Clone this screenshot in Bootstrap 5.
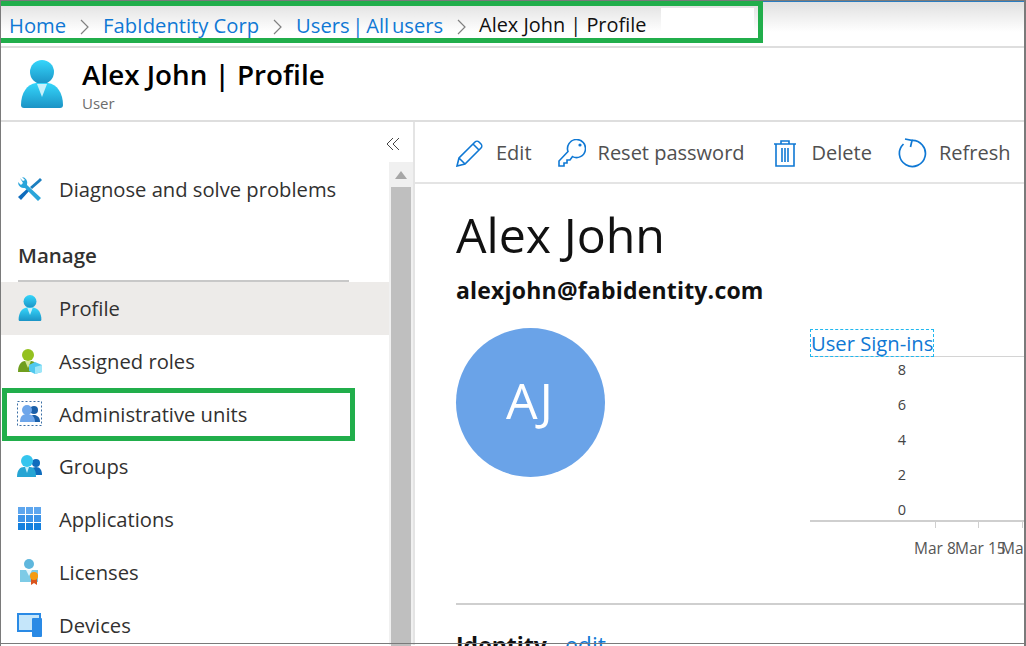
<!DOCTYPE html>
<html lang="en">
<head>
    <meta charset="UTF-8">
    <title>Alex John | Profile</title>
    <link href="https://cdn.jsdelivr.net/npm/bootstrap@5.3.0/dist/css/bootstrap.min.css" rel="stylesheet">
    <style>
        html, body { height: 100%; overflow: hidden; }
        body { background: #fff; font-family: "Open Sans", "Noto Sans", sans-serif; color: #323130; }
        a { color: #0f78d4; text-decoration: none; }

        .shot-frame { width: 1026px; height: 646px; position: relative; overflow: hidden;
            border-top: 1px solid #7a7a7a; border-left: 1px solid #7a7a7a;
            border-right: 2px solid #7a7a7a; }
        .frame-base { position: absolute; left: 0; right: 0; top: 642px; height: 1px; background: #7a7a7a; }

        .crumb-bar { height: 47px; padding: 9px 0 0 8px; gap: 14px; font-size: 20.200px; line-height: 28px; white-space: nowrap;
            background: linear-gradient(#e0e0e0, #fff 30px); border-top: 1px solid #2b7cc0; border-bottom: 2px solid #dedede; }
        .crumb-here { color: #111; font-size: 19.900px; margin-left: -1px; }
        .crumb-tight { word-spacing: -2.500px; }
        .crumb-sep { width: 9px; height: 16px; flex: none; }
        .crumb-blank { position: absolute; left: 660px; top: 7px; width: 93px; height: 30px; background: #fff; }

        .title-bar { height: 74px; border-bottom: 2px solid #dedede; padding-left: 20px; gap: 19px; }
        .title-bar h1 { font-size: 27.800px; line-height: 32px; margin: 0; font-weight: 600; color: #000; }
        .title-text { padding-top: 2px; }
        .title-sub { font-size: 15px; line-height: 19px; color: #6d6d6d; margin-top: 4px; }

        .page-body { height: 523px; }
        .side-col { width: 414px; flex: none; border-right: 2px solid #e4e4e4; position: relative; }
        .side-list { width: 388px; flex: none; padding-top: 41px; }
        .side-item { height: 52.800px; padding-left: 16px; gap: 16px; font-size: 20.200px; color: #323130; white-space: nowrap; }
        .side-item.is-active { background: #edebe9; }
        .side-item svg { flex: none; }
        .side-head { font-size: 20.500px; font-weight: 600; color: #323130; margin: 22px 0 0 17px; width: 331px; height: 44px; border-bottom: 2px solid #c8c8c8; line-height: 30px; padding-top: 2px; }
        .side-collapse { position: absolute; right: 13px; top: 15px; }
        .side-scroll { width: 24px; flex: none; margin-top: 40px; background: #f0f0f0; padding: 0 2px; }
        .side-scroll-arrow { height: 25px; }
        .side-scroll-thumb { height: 100%; background: #bfbfbf; }

        .main-col { flex: 1; min-width: 0; }
        .cmd-bar { height: 62px; padding: 2px 0 0 41px; border-bottom: 2px solid #e4e4e4; font-size: 20px; color: #505050; white-space: nowrap; }
        .cmd-item { gap: 12px; margin-right: 26px; }
        .cmd-item svg { flex: none; }

        .profile-pane { padding-left: 41px; position: relative; }
        .profile-name { font-size: 48.300px; line-height: 56px; font-weight: 400; color: #111; margin: 22px 0 0; }
        .profile-mail { font-size: 23px; letter-spacing: .2px; font-weight: 700; color: #111; line-height: 28px; margin-top: 14px; }
        .avatar-circle { width: 149px; height: 149px; border-radius: 50%; background: #6aa3e8; color: #fff; font-size: 50px; letter-spacing: 2px; flex: none; margin-top: 24px; padding-bottom: 4px; }
        .chart-box { position: absolute; left: 395px; top: 123px; width: 216px; }
        .chart-title { display: inline-block; font-size: 20.200px; line-height: 26px; border: 1px dashed #1fb7ef; color: #0f78d4; white-space: nowrap; }
        .chart-head-rule { border-top: 1px solid #d4d4d4; margin-top: -1px; }
        .chart-ticks { width: 96px; font-size: 14.500px; line-height: 35.100px; color: #444; text-align: right; margin-top: -5px; }
        .chart-axis { height: 8px; border-top: 2px solid #cfcfcf; position: relative; margin-top: -7px; }
        .chart-axis i { position: absolute; top: 0; width: 1px; height: 6px; background: #cfcfcf; }
        .chart-dates { font-size: 15.500px; color: #555; position: relative; height: 24px; margin-top: 9px; white-space: nowrap; }
        .chart-dates span { position: absolute; top: 0; }
        .pane-rule { border-top: 2px solid #cfcfcf; margin-top: 126px; }
        .identity-row { font-size: 23px; line-height: 28px; margin-top: 26px; font-weight: 700; color: #111; white-space: nowrap; }
        .identity-row a { font-weight: 400; margin-left: 12px; }

        .mark-box { position: absolute; border: 5px solid #21ae4b; pointer-events: none; }
        .mark-crumb { left: -1px; top: 0; width: 763px; height: 42px; border-left-width: 0; }
        .mark-admin { left: 1px; top: 387px; width: 353px; height: 53px; }
    </style>
</head>
<body>
<div class="shot-frame">

    <div class="crumb-bar d-flex">
        <a href="#">Home</a>
        <svg class="crumb-sep mt-2" viewBox="0 0 9 16"><path d="M1 1l7 7-7 7" fill="none" stroke="#808080" stroke-width="1.2"/></svg>
        <a href="#">FabIdentity Corp</a>
        <svg class="crumb-sep mt-2" viewBox="0 0 9 16"><path d="M1 1l7 7-7 7" fill="none" stroke="#808080" stroke-width="1.2"/></svg>
        <a href="#" class="crumb-tight">Users | All users</a>
        <svg class="crumb-sep mt-2" viewBox="0 0 9 16"><path d="M1 1l7 7-7 7" fill="none" stroke="#808080" stroke-width="1.2"/></svg>
        <span class="crumb-here">Alex John | Profile</span>
    </div>
    <div class="crumb-blank"></div>

    <div class="title-bar d-flex align-items-center">
        <svg width="42" height="48" viewBox="0 0 42 48">
            <defs><linearGradient id="userFill" x1="0" y1="0" x2="0" y2="1"><stop offset="0" stop-color="#35d6fb"/><stop offset="1" stop-color="#1b93c5"/></linearGradient></defs>
            <circle cx="21" cy="12" r="12" fill="url(#userFill)"/>
            <path d="M0 45c0-12 6-21 15-22h12c9 1 15 10 15 22 0 2-1 3-3 3H3c-2 0-3-1-3-3z" fill="url(#userFill)"/>
            <path d="M16 24h10l-5 13z" fill="#c9f1fb"/>
        </svg>
        <div class="title-text">
            <h1>Alex John | Profile</h1>
            <div class="title-sub">User</div>
        </div>
    </div>

    <div class="page-body d-flex">
        <div class="side-col d-flex">
            <div class="side-list">
                <div class="side-item d-flex align-items-center">
                    <svg width="26" height="24" viewBox="0 0 26 24"><path d="M1 20l10-9 2 2-9 10z" fill="#0f6cbd"/><path d="M13 10l8-7 2-2 2 2-2 2-8 7z" fill="#1b7fc0"/><path d="M3 1l3 3 2-1-3-3a6 6 0 0 1 5 8l14 13-3 3L8 11a6 6 0 0 1-7-6l3 3 2-2z" fill="#2aa5da"/></svg>
                    Diagnose and solve problems
                </div>
                <div class="side-head">Manage</div>
                <div class="side-item d-flex align-items-center is-active">
                    <svg width="26" height="26" viewBox="0 0 42 48"><circle cx="21" cy="12" r="12" fill="url(#userFill)"/><path d="M0 45c0-12 6-21 15-22h12c9 1 15 10 15 22 0 2-1 3-3 3H3c-2 0-3-1-3-3z" fill="url(#userFill)"/><path d="M16 24h10l-5 13z" fill="#c9f1fb"/></svg>
                    Profile
                </div>
                <div class="side-item d-flex align-items-center">
                    <svg width="26" height="26" viewBox="0 0 26 26"><circle cx="11" cy="7" r="6" fill="#94c11f"/><path d="M1 24c0-7 3-11 7-11h6c4 0 7 4 7 11z" fill="#6f9e1e"/><path d="M8 13h6l-3 7z" fill="#d4e89a"/><path d="M18 14l7 3v7l-7 2-6-3v-6z" fill="#50c8ef"/><path d="M18 19l7-2v7l-7 2z" fill="#9ce6f8"/></svg>
                    Assigned roles
                </div>
                <div class="side-item d-flex align-items-center">
                    <svg width="26" height="26" viewBox="0 0 26 26"><rect x=".5" y=".5" width="24" height="24" fill="none" stroke="#3a6ea5" stroke-dasharray="2 2"/><circle cx="17" cy="9" r="4" fill="#1a5fa8"/><path d="M12 21c0-5 2-7 5-7s6 2 6 7z" fill="#1a5fa8"/><circle cx="10" cy="9" r="5" fill="#6ea6ea"/><path d="M3 21c0-6 3-8 7-8s8 2 8 8z" fill="#6ea6ea"/></svg>
                    Administrative units
                </div>
                <div class="side-item d-flex align-items-center">
                    <svg width="26" height="24" viewBox="0 0 26 24"><circle cx="19" cy="8" r="4" fill="#0f6cbd"/><path d="M13 20c0-5 2-8 6-8s6 3 6 8z" fill="#0f6cbd"/><circle cx="10" cy="6" r="6" fill="#35c5ee"/><path d="M0 22c0-7 3-10 7-10h6c4 0 6 3 6 10z" fill="#26a5d4"/><path d="M8 12h4l-2 6z" fill="#c9f1fb"/></svg>
                    Groups
                </div>
                <div class="side-item d-flex align-items-center">
                    <svg width="26" height="24" viewBox="-1 0 26 24"><rect width="7" height="7" fill="#5ea6ee"/><rect x="8" width="7" height="7" fill="#5ea6ee"/><rect x="16" width="7" height="7" fill="#5ea6ee"/><rect y="8" width="7" height="7" fill="#3c93e8"/><rect x="8" y="8" width="7" height="7" fill="#3c93e8"/><rect x="16" y="8" width="7" height="7" fill="#3c93e8"/><rect y="16" width="7" height="7" fill="#1480de"/><rect x="8" y="16" width="7" height="7" fill="#1480de"/><rect x="16" y="16" width="7" height="7" fill="#1480de"/></svg>
                    Applications
                </div>
                <div class="side-item d-flex align-items-center">
                    <svg width="26" height="26" viewBox="0 0 26 26"><circle cx="12" cy="5" r="5" fill="#5fb7dd"/><path d="M3 11h18v12H3z" fill="#7ecbe6"/><path d="M9 11h6l-3 6z" fill="#e3f5fb"/><path d="M14 20h6v6l-3-2-3 2z" fill="#d9541e"/><circle cx="17" cy="17" r="4" fill="#f59b10"/></svg>
                    Licenses
                </div>
                <div class="side-item d-flex align-items-center">
                    <svg width="26" height="24" viewBox="0 0 26 24"><rect x="1" y="1" width="22" height="17" fill="#c5e6fa" stroke="#2a8ae5" stroke-width="2"/><rect x="15" y="5" width="10" height="19" rx="1" fill="#2a8ae5"/></svg>
                    Devices
                </div>
            </div>
            <div class="side-scroll">
                <div class="side-scroll-arrow d-flex align-items-center justify-content-center">
                    <svg width="12" height="8" viewBox="0 0 12 8"><path d="M6 0l6 8H0z" fill="#a6a6a6"/></svg>
                </div>
                <div class="side-scroll-thumb"></div>
            </div>
            <svg class="side-collapse" width="14" height="14" viewBox="0 0 14 14"><path d="M7 1L1 7l6 6M13 1L7 7l6 6" fill="none" stroke="#444" stroke-width="1"/></svg>
        </div>

        <div class="main-col">
            <div class="cmd-bar d-flex align-items-center">
                <div class="cmd-item d-flex align-items-center">
                    <svg width="28" height="28" viewBox="0 0 28 28"><path d="M1 27l2-8L19 3c1-1 3-1 4 0l2 2c1 1 1 3 0 4L9 25zM3 19l6 6M17 5l6 6" fill="none" stroke="#0f78d4" stroke-width="1.6"/></svg>
                    Edit
                </div>
                <div class="cmd-item d-flex align-items-center">
                    <svg width="28" height="28" viewBox="0 0 28 28"><path d="M10 12.500L1 22v5h5v-3h3v-3h3l2.500-3.400A9 9 0 1 0 10 12.500z" fill="none" stroke="#0f78d4" stroke-width="1.6"/><circle cx="22" cy="6" r="1.600" fill="#0f78d4"/></svg>
                    Reset password
                </div>
                <div class="cmd-item d-flex align-items-center">
                    <svg width="29" height="28" viewBox="0 0 29 28"><path d="M3 5h22M10 5V2h8v3M5 5v22h18V5M11 9v14M14 9v14M17 9v14" fill="none" stroke="#0f78d4" stroke-width="1.6"/></svg>
                    Delete
                </div>
                <div class="cmd-item d-flex align-items-center">
                    <svg width="29" height="30" viewBox="0 0 29 30"><path d="M13.500 2.500A13 13 0 1 1 5.500 6" fill="none" stroke="#0f78d4" stroke-width="1.7"/><path d="M7 1l7 1.500L12.500 9" fill="none" stroke="#0f78d4" stroke-width="1.7"/></svg>
                    Refresh
                </div>
            </div>
            <div class="profile-pane">
                <h2 class="profile-name">Alex John</h2>
                <div class="profile-mail">alexjohn@fabidentity.com</div>
                <div class="avatar-circle d-flex align-items-center justify-content-center">AJ</div>
                <div class="chart-box">
                    <div class="chart-title">User Sign-ins</div>
                    <div class="chart-head-rule"></div>
                    <div class="chart-ticks">8<br>6<br>4<br>2<br>0</div>
                    <div class="chart-axis"><i style="left:125px"></i><i style="left:168px"></i><i style="left:212px"></i></div>
                    <div class="chart-dates"><span style="left:104px">Mar 8</span><span style="left:145px">Mar 15</span><span style="left:191px">Mar</span></div>
                </div>
                <div class="pane-rule"></div>
                <div class="identity-row">Identity <a href="#">edit</a></div>
            </div>
        </div>
    </div>

    <div class="mark-box mark-crumb"></div>
    <div class="mark-box mark-admin"></div>
    <div class="frame-base"></div>
</div>
<script src="https://cdn.jsdelivr.net/npm/bootstrap@5.3.0/dist/js/bootstrap.bundle.min.js"></script>
</body>
</html>
